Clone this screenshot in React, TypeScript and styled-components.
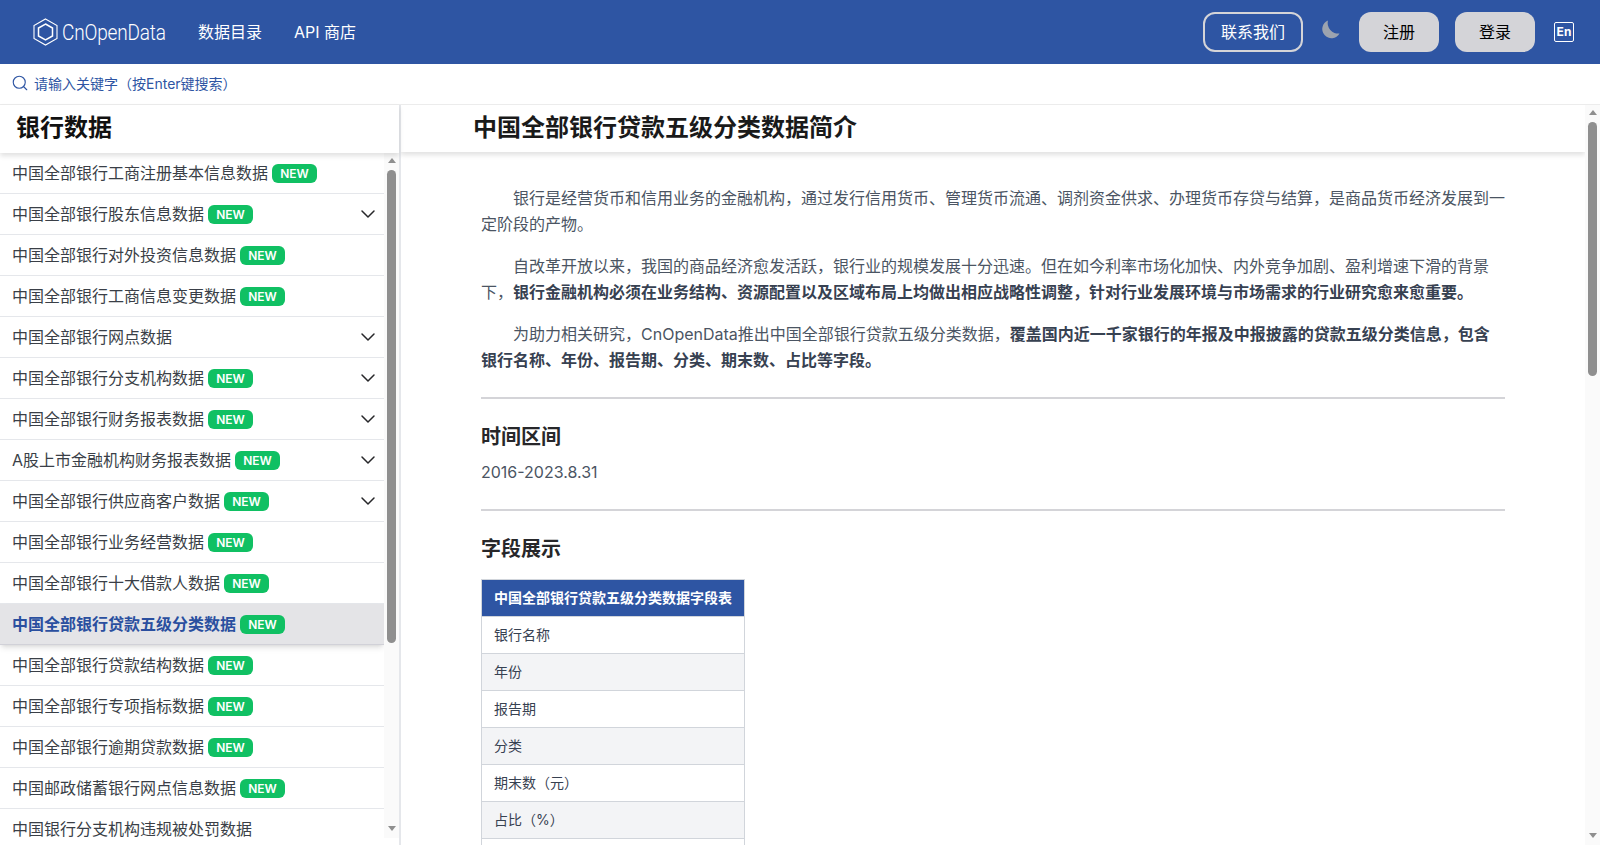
import React from "react";
import styled, { createGlobalStyle } from "styled-components";
import { ChevronDown, Search } from "lucide-react";

const GlobalStyle = createGlobalStyle`
  html, body {
    margin: 0;
    padding: 0;
    height: 100%;
    overflow: hidden;
    background: #fff;
    font-family: Inter, "Noto Sans CJK SC", sans-serif;
  }
  * {
    box-sizing: border-box;
  }
`;

const Page = styled.div`
  height: 861px;
  display: flex;
  flex-direction: column;
`;

const Header = styled.header`
  height: 64px;
  flex: none;
  background: #2e55a3;
  display: flex;
  align-items: center;
  padding: 0 26px 0 33px;
  color: #fff;
`;

const Logo = styled.div`
  display: flex;
  align-items: center;
  gap: 4px;
  margin-right: 32px;
`;

const LogoText = styled.span`
  font-family: Roboto, sans-serif;
  font-weight: 300;
  font-size: 22px;
  letter-spacing: -0.2px;
  transform: scaleX(0.865);
  transform-origin: left center;
  width: 104px;
  white-space: nowrap;
`;

const NavLink = styled.a`
  font-size: 16px;
  color: #fff;
  margin: -2px 32px 0 0;
`;

const HeaderRight = styled.div`
  margin-left: auto;
  display: flex;
  align-items: center;
`;

const ContactButton = styled.button`
  width: 100px;
  height: 40px;
  padding: 0 0 2px;
  border: 2px solid #d4d4d8;
  border-radius: 12px;
  background: transparent;
  color: #fff;
  font: inherit;
  font-size: 16px;
  margin-right: 18px;
`;

const GrayButton = styled.button`
  width: 80px;
  height: 40px;
  padding: 0 0 2px;
  border: none;
  border-radius: 12px;
  background: #d4d4d8;
  color: #000;
  font: inherit;
  font-size: 16px;
  margin-right: 16px;
`;

const MoonIcon = styled.svg`
  width: 19px;
  height: 19px;
  margin: -5px 19px 0 0;
`;

const LangIcon = styled.div`
  width: 20px;
  height: 20px;
  margin-left: 3px;
  border: 1.5px solid #fff;
  border-radius: 2px;
  font-size: 12px;
  font-weight: 700;
  line-height: 17px;
  text-align: center;
  color: #fff;
`;

const SearchBar = styled.div`
  height: 41px;
  flex: none;
  display: flex;
  align-items: center;
  gap: 5px;
  padding: 0 11px 2px;
  border-bottom: 1px solid #ececec;
  color: #2e55a3;
  font-size: 14px;
`;

const Main = styled.div`
  height: 740px;
  flex: none;
  display: flex;
`;

const Sidebar = styled.aside`
  width: 401px;
  flex: none;
  display: flex;
  flex-direction: column;
  border-right: 2px solid #e5e7eb;
`;

const SidebarTitle = styled.h2`
  height: 48px;
  flex: none;
  margin: 0;
  padding-left: 16px;
  font-size: 24px;
  font-weight: 700;
  line-height: 45px;
  color: #111;
  box-shadow: 0 3px 5px rgba(0, 0, 0, 0.12);
  position: relative;
`;

const SideBody = styled.div`
  height: 685px;
  flex: none;
  display: flex;
`;

const SideList = styled.ul`
  flex: 1;
  min-width: 0;
  margin: 0;
  padding: 0;
  list-style: none;
  overflow: hidden;
`;

const SideItem = styled.li<{ $active?: boolean }>`
  height: 41px;
  display: flex;
  align-items: center;
  padding: 0 12px 2px;
  font-size: 16px;
  color: ${(props) => (props.$active ? "#2a4f9f" : "#3a3f47")};
  font-weight: ${(props) => (props.$active ? 600 : 400)};
  background: ${(props) => (props.$active ? "#e4e4e7" : "transparent")};
  border-bottom: 1px solid ${(props) => (props.$active ? "#d1d1d8" : "#e5e7eb")};
  box-shadow: ${(props) =>
    props.$active
      ? "0 4px 6px -1px rgba(0, 0, 0, 0.1), 0 2px 4px -2px rgba(0, 0, 0, 0.1)"
      : "none"};
  position: relative;
`;

const NewBadge = styled.span`
  margin: 2px 0 0 4px;
  width: 45px;
  height: 19px;
  border-radius: 6px;
  background: #10c063;
  color: #fff;
  font-size: 12px;
  font-weight: 600;
  line-height: 19px;
  text-align: center;
`;

const Chevron = styled(ChevronDown)`
  margin: 2px -8px 0 auto;
  color: #27272a;
`;

// headless page shows no native scrollbars, so the bar is drawn
const ScrollTrack = styled.div`
  width: 15px;
  flex: none;
  background: #fafafa;
  display: flex;
  flex-direction: column;
  align-items: center;
`;

const ArrowUp = styled.div`
  flex: none;
  margin: 5px 0 7px;
  border-left: 4.5px solid transparent;
  border-right: 4.5px solid transparent;
  border-bottom: 5px solid #8f8f8f;
`;

const ArrowDown = styled.div`
  flex: none;
  margin: auto 0 7px;
  border-left: 4.5px solid transparent;
  border-right: 4.5px solid transparent;
  border-top: 5px solid #8f8f8f;
`;

const Thumb = styled.div<{ $height: number }>`
  flex: none;
  width: 9px;
  height: ${(props) => props.$height}px;
  border-radius: 5px;
  background: #8f8f8f;
`;

const Content = styled.section`
  flex: 1;
  min-width: 0;
  overflow: hidden;
`;

const ContentTitle = styled.div`
  height: 47px;
  background: #fff;
  box-shadow: 0 3px 5px rgba(0, 0, 0, 0.12);
`;

const ContentHeading = styled.h1`
  max-width: 1040px;
  margin: 0 auto;
  font-size: 24px;
  font-weight: 700;
  line-height: 45px;
  color: #1a1a1a;
`;

const Article = styled.article`
  max-width: 1024px;
  margin: 0 auto;
  padding-top: 33px;
  color: #4b5563;
  font-size: 16px;
  line-height: 26px;
`;

const Para = styled.p`
  margin: 0 0 16px;
  text-indent: 2em;

  b {
    font-weight: 600;
    color: #374151;
  }
`;

const Rule = styled.hr`
  border: none;
  border-top: 2px solid #d4d4d8;
  margin: 24px 0;
`;

const SubTitle = styled.h3`
  margin: 0 0 8px;
  font-size: 20px;
  font-weight: 600;
  line-height: 28px;
  color: #27272a;
`;

const DateText = styled.p`
  margin: 0;
  line-height: 26px;
`;

const FieldTable = styled.table`
  width: 263px;
  margin-top: 16px;
  border-collapse: collapse;
  font-size: 14px;
  line-height: 20px;

  th {
    background: #2e55a3;
    color: #fff;
    font-weight: 600;
    text-align: left;
    white-space: nowrap;
  }

  th,
  td {
    height: 37px;
    padding: 0 12px;
    border: 1px solid #d1d5db;
  }

  td {
    color: #374151;
  }

  tr:nth-child(even) td {
    background: #f3f4f6;
  }
`;

const items = [
  { name: "中国全部银行工商注册基本信息数据", isNew: true },
  { name: "中国全部银行股东信息数据", isNew: true, more: true },
  { name: "中国全部银行对外投资信息数据", isNew: true },
  { name: "中国全部银行工商信息变更数据", isNew: true },
  { name: "中国全部银行网点数据", more: true },
  { name: "中国全部银行分支机构数据", isNew: true, more: true },
  { name: "中国全部银行财务报表数据", isNew: true, more: true },
  { name: "A股上市金融机构财务报表数据", isNew: true, more: true },
  { name: "中国全部银行供应商客户数据", isNew: true, more: true },
  { name: "中国全部银行业务经营数据", isNew: true },
  { name: "中国全部银行十大借款人数据", isNew: true },
  { name: "中国全部银行贷款五级分类数据", isNew: true, active: true },
  { name: "中国全部银行贷款结构数据", isNew: true },
  { name: "中国全部银行专项指标数据", isNew: true },
  { name: "中国全部银行逾期贷款数据", isNew: true },
  { name: "中国邮政储蓄银行网点信息数据", isNew: true },
  { name: "中国银行分支机构违规被处罚数据" },
];

const fields = ["银行名称", "年份", "报告期", "分类", "期末数（元）", "占比（%）", ""];

const App: React.FC = () => {
  return (
    <Page>
      <GlobalStyle />
      <Header>
        <Logo>
          <svg width="25" height="28" viewBox="0 0 25 28" fill="none" stroke="#fff">
            <path d="M12.5 1 L24 7.5 V20.5 L12.5 27 L1 20.5 V7.5 Z" strokeWidth="1.1" />
            <path d="M12.5 6 L19.5 10 V18 L12.5 22 L5.5 18 V10 Z" strokeWidth="1.5" />
          </svg>
          <LogoText>CnOpenData</LogoText>
        </Logo>
        <NavLink>数据目录</NavLink>
        <NavLink>API 商店</NavLink>
        <HeaderRight>
          <ContactButton>联系我们</ContactButton>
          <MoonIcon viewBox="0 0 19 19" fill="#9ca3af">
            <path d="M7 .5A9.2 9.2 0 1 0 18.5 13.5A10.5 10.5 0 0 1 7 .5z" />
          </MoonIcon>
          <GrayButton>注册</GrayButton>
          <GrayButton>登录</GrayButton>
          <LangIcon>En</LangIcon>
        </HeaderRight>
      </Header>
      <SearchBar>
        <Search size={18} strokeWidth={1.5} />
        请输入关键字（按Enter键搜索）
      </SearchBar>
      <Main>
        <Sidebar>
          <SidebarTitle>银行数据</SidebarTitle>
          <SideBody>
            <SideList>
              {items.map((item) => (
                <SideItem key={item.name} $active={item.active}>
                  {item.name}
                  {item.isNew && <NewBadge>NEW</NewBadge>}
                  {item.more && <Chevron size={24} strokeWidth={1.5} />}
                </SideItem>
              ))}
            </SideList>
            <ScrollTrack>
              <ArrowUp />
              <Thumb $height={473} />
              <ArrowDown />
            </ScrollTrack>
          </SideBody>
        </Sidebar>
        <Content>
          <ContentTitle>
            <ContentHeading>中国全部银行贷款五级分类数据简介</ContentHeading>
          </ContentTitle>
          <Article>
            <Para>
              银行是经营货币和信用业务的金融机构，通过发行信用货币、管理货币流通、调剂资金供求、办理货币存贷与结算，是商品货币经济发展到一定阶段的产物。
            </Para>
            <Para>
              自改革开放以来，我国的商品经济愈发活跃，银行业的规模发展十分迅速。但在如今利率市场化加快、内外竞争加剧、盈利增速下滑的背景下，
              <b>
                银行金融机构必须在业务结构、资源配置以及区域布局上均做出相应战略性调整，针对行业发展环境与市场需求的行业研究愈来愈重要。
              </b>
            </Para>
            <Para>
              为助力相关研究，CnOpenData推出中国全部银行贷款五级分类数据，
              <b>
                覆盖国内近一千家银行的年报及中报披露的贷款五级分类信息，包含银行名称、年份、报告期、分类、期末数、占比等字段。
              </b>
            </Para>
            <Rule />
            <SubTitle>时间区间</SubTitle>
            <DateText>2016-2023.8.31</DateText>
            <Rule />
            <SubTitle>字段展示</SubTitle>
            <FieldTable>
              <thead>
                <tr>
                  <th>中国全部银行贷款五级分类数据字段表</th>
                </tr>
              </thead>
              <tbody>
                {fields.map((field, i) => (
                  <tr key={i}>
                    <td>{field}</td>
                  </tr>
                ))}
              </tbody>
            </FieldTable>
          </Article>
        </Content>
        <ScrollTrack>
          <ArrowUp />
          <Thumb $height={254} />
          <ArrowDown />
        </ScrollTrack>
      </Main>
    </Page>
  );
};

export default App;
